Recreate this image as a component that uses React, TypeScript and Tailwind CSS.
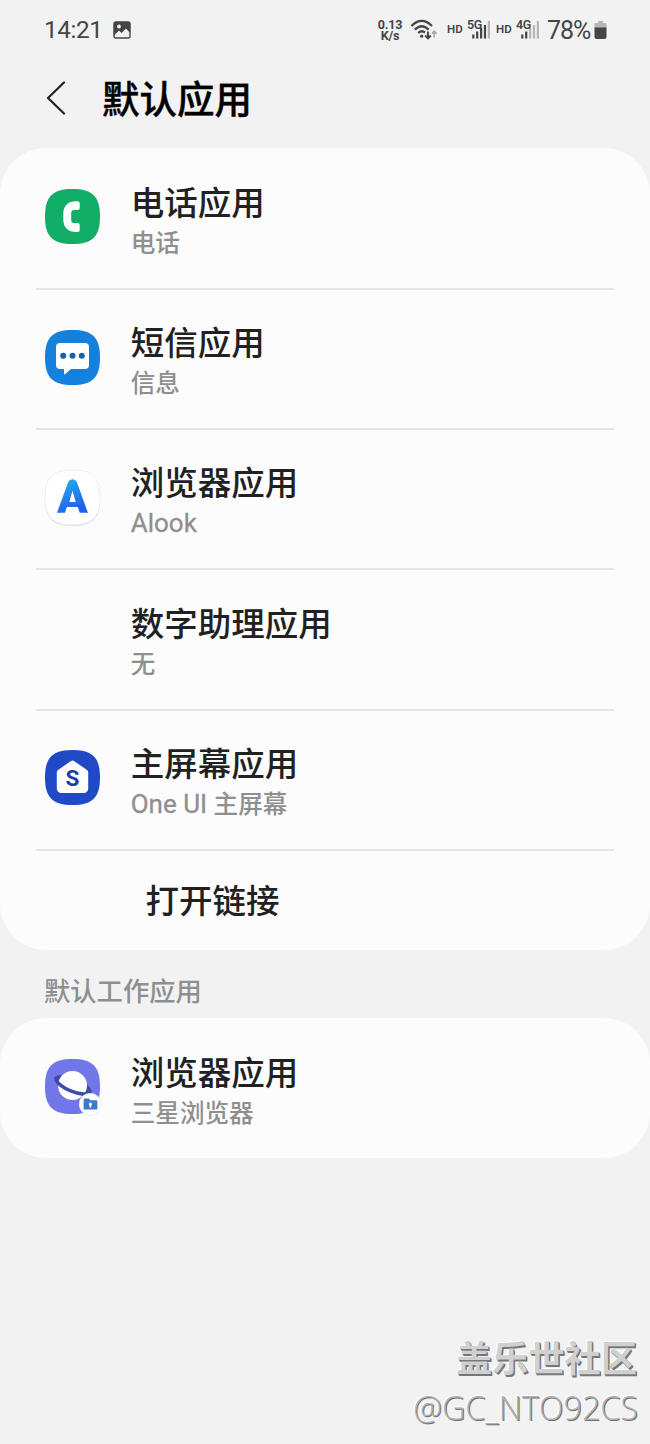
import type { ReactNode } from "react";

const SQUIRCLE = "M27.5 0C47.500 0 55 7.500 55 27.500S47.500 55 27.500 55 0 47.500 0 27.500 7.500 0 27.500 0Z";

function PhoneIcon() {
  return (
    <svg viewBox="0 0 55 55" className="size-[55px]">
      <path d={SQUIRCLE} fill="#12ae67" />
      <path
        d="M31.200 12.300h1.500a2 2 0 0 1 2 2v4.800a2 2 0 0 1-2 2h-3.200c-2.200 0-3.300 1-3.300 3.200v6.600c0 2.200 1.100 3.200 3.300 3.200h3.200a2 2 0 0 1 2 2v4.800a2 2 0 0 1-2 2h-1.500c-8 0-12.900-4.600-12.900-12.500v-5.600c0-7.900 4.900-12.500 12.900-12.500Z"
        fill="#fff"
      />
    </svg>
  );
}

function MessageIcon() {
  return (
    <svg viewBox="0 0 55 55" className="size-[55px]">
      <path d={SQUIRCLE} fill="#1482dc" />
      <path
        d="M15 13h25a4 4 0 0 1 4 4v18a4 4 0 0 1-4 4H26l-6 5.300a.6.6 0 0 1-1-.5V39h-4a4 4 0 0 1-4-4V17a4 4 0 0 1 4-4Z"
        fill="#fff"
      />
      <circle cx="18.200" cy="25.700" r="3" fill="#1560b0" />
      <circle cx="27.500" cy="25.700" r="3" fill="#1560b0" />
      <circle cx="36.800" cy="25.700" r="3" fill="#1560b0" />
    </svg>
  );
}

function AlookIcon() {
  return (
    <svg viewBox="0 0 55 55" className="size-[55px] overflow-visible">
      <defs>
        <linearGradient id="alook" x1="0" y1="0" x2="0.4" y2="1">
          <stop offset="0" stopColor="#20b4ee" />
          <stop offset="1" stopColor="#2260e8" />
        </linearGradient>
      </defs>
      <path d={SQUIRCLE} transform="translate(0 .8)" fill="#d2d2d4" />
      <path d={SQUIRCLE} fill="#fff" stroke="#ebe6ea" strokeWidth=".7" />
      <path
        d="M23.200 12Q24.500 9.300 27.500 9.300T31.800 12L42.900 42.800H34.800L32.800 37H21.800L20 42.800H12ZM27.500 20.700L24.300 32H30.700Z"
        fill="url(#alook)"
        fillRule="evenodd"
      />
    </svg>
  );
}

function HomeIcon() {
  return (
    <svg viewBox="0 0 55 55" className="size-[55px]">
      <path d={SQUIRCLE} fill="#2049c6" />
      <path
        d="M25.700 11.200a3 3 0 0 1 3.600 0L42 20q1.200.9 1.200 2.400V38.500a4.500 4.500 0 0 1-4.500 4.500H16.300a4.500 4.500 0 0 1-4.500-4.500V22.400q0-1.500 1.200-2.400Z"
        fill="#fff"
      />
      <text
        x="27.500"
        y="36.300"
        textAnchor="middle"
        fontFamily="Roboto"
        fontWeight="700"
        fontSize="22.500"
        fill="#1c3f9e"
      >
        S
      </text>
    </svg>
  );
}

function InternetIcon() {
  return (
    <svg viewBox="0 0 55 55" className="size-[55px] overflow-visible">
      <path d={SQUIRCLE} fill="#7176e8" />
      <g transform="translate(28 26.200) rotate(22)">
        <ellipse rx="19.800" ry="7.500" fill="#3f4ca6" />
      </g>
      <circle cx="27.500" cy="26.500" r="14.500" fill="#fff" />
      <path
        d="M-18.300 0C-15 8.200 15 8.200 18.300 0"
        transform="translate(28 26.200) rotate(22)"
        fill="none"
        stroke="#3f4ca6"
        strokeWidth="3.600"
        strokeLinecap="round"
      />
      <circle cx="45.200" cy="45.300" r="11" fill="#fff" stroke="#e4e4ee" strokeWidth=".6" />
      <path
        d="M39.800 39.600h4l1.600 1.600h5.800a1.200 1.200 0 0 1 1.200 1.200v7a1.200 1.200 0 0 1-1.200 1.200H39.800a1.200 1.200 0 0 1-1.200-1.200v-8.600a1.200 1.200 0 0 1 1.200-1.200Z"
        fill="#3f78cf"
      />
      <path d="M45.400 43.400a1.700 1.700 0 0 1 .8 3.100v2h-1.600v-2a1.700 1.700 0 0 1 .8-3.100Z" fill="#fff" />
    </svg>
  );
}

function Signal({ label, on }: { label: string; on: number }) {
  const heights = [4, 7, 10.500, 13.500, 17.500];
  return (
    <div className="relative h-6 w-[23px]">
      <span className="absolute top-[1px] left-0 text-[12.500px] leading-none font-semibold tracking-[-0.5px]">
        {label}
      </span>
      <svg viewBox="0 0 23 24" className="h-6 w-[23px]">
        {heights.map((h, i) => (
          <rect
            key={h}
            x={5.200 + i * 3.900}
            y={20.500 - h}
            width="2.200"
            height={h}
            fill={i < on ? "#444" : "#b4b4b4"}
          />
        ))}
      </svg>
    </div>
  );
}

function StatusBar() {
  return (
    <div className="flex h-[60px] items-center pl-[44px] text-[#454545]">
      <span className="w-[58px] pt-[1px] text-[24.300px] leading-none tracking-[-0.4px] whitespace-nowrap">14:21</span>
      <svg viewBox="0 0 18 18" className="mb-px ml-[11px] size-[18px]">
        <rect x=".9" y=".9" width="16.200" height="16.200" rx="2" fill="#454545" stroke="#454545" strokeWidth="1.200" />
        <path d="M2 13.500 6 9.500 8.500 12 13 7.500 16.300 11.200V15.500Q16.300 16.300 15.500 16.300H2.500Q1.700 16.300 1.700 15.500Z" fill="#f2f2f2" />
        <circle cx="6" cy="5.500" r="1.900" fill="#f2f2f2" />
      </svg>

      <div className="ml-[246px] flex w-[26px] flex-col items-center text-[12.500px] leading-[11.500px] font-bold tracking-[-0.2px]">
        <span>0.13</span>
        <span>K/s</span>
      </div>

      {/* wifi */}
      <svg viewBox="0 0 27 24" className="mb-[3px] ml-[7px] h-6 w-[27px] shrink-0" fill="none" strokeWidth="2.300">
        <path d="M1.400 9Q11.700-1.300 22 9M4.800 12.600Q11.700 5.800 18.600 12.600M8.200 16Q11.700 12.700 15 15.500" stroke="#454545" />
        <circle cx="11.700" cy="19.200" r="1.600" fill="#454545" />
        <path d="M18 14.500v6.500M15.200 18.500l2.800 2.900 2.800-2.900" stroke="#454545" strokeWidth="1.900" />
        <path d="M24.200 20.500v-6M21.900 16.700l2.300-2.400 2.300 2.400" stroke="#aaa" strokeWidth="1.700" />
      </svg>

      <span className="ml-[10px] w-[16px] text-[11.500px] leading-none font-semibold">HD</span>
      <div className="ml-[4px]"><Signal label="5G" on={4} /></div>
      <span className="ml-[6px] w-[16px] text-[11.500px] leading-none font-semibold">HD</span>
      <div className="ml-[4px]"><Signal label="4G" on={2} /></div>
      <span className="ml-[8px] w-[45px] text-[25px] leading-none tracking-[-1px]">78%</span>
      <svg viewBox="0 0 13 20" className="ml-[2px] h-5 w-[13px] shrink-0">
        <path d="M4 1h5v2h2.500q1 0 1 1V8H.5V4q0-1 1-1H4Z" fill="#b8b8b8" />
        <path d="M.5 7.500h12V17q0 2-2 2h-8q-2 0-2-2Z" fill="#454545" />
      </svg>
    </div>
  );
}

type RowProps = { icon?: ReactNode; title: string; latin?: string; sub?: string; last?: boolean };

function Row({ icon, title, latin, sub, last }: RowProps) {
  return (
    <div className={`mx-9 flex h-[140.200px] pl-[9px] ${last ? "" : "border-b-2 border-[#e5e5e5]"}`}>
      <div className="mt-[39.700px] w-[55px] shrink-0">{icon}</div>
      <div className="ml-[30.700px] pt-[33.200px]">
        <div className="text-[33.500px] leading-[42px] font-medium text-[#212121]">{title}</div>
        <div className="h-[38px] text-[24.600px] leading-[37px] font-medium text-[#8f8f8f]">
          {latin && <span className="text-[26px] font-normal [-webkit-text-stroke:0.3px_#8f8f8f]">{latin}</span>}
          {sub}
        </div>
      </div>
    </div>
  );
}

export default function App() {
  return (
    <div className="flex h-[1444px] w-[650px] flex-col bg-[#f2f2f2] font-[Roboto,'Noto_Sans_CJK_SC',sans-serif]">
      <StatusBar />

      <header className="flex h-[88px] items-start pt-[14px] pl-[46px]">
        <svg viewBox="0 0 20 34" className="mt-[7px] h-[34px] w-5" fill="none" stroke="#222" strokeWidth="2.200" strokeLinecap="round" strokeLinejoin="round">
          <path d="M18 1.500 2 17l16 15.500" />
        </svg>
        <h1 className="ml-[36px] pt-[1px] text-[37.500px] leading-[50px] font-medium text-black [-webkit-text-stroke:0.4px_black]">默认应用</h1>
      </header>

      <section className="h-[802px] rounded-[46px] bg-[#fcfcfc] pt-[1.800px]">
        <Row icon={<PhoneIcon />} title="电话应用" sub="电话" />
        <Row icon={<MessageIcon />} title="短信应用" sub="信息" />
        <Row icon={<AlookIcon />} title="浏览器应用" latin="Alook" />
        <Row title="数字助理应用" sub="无" />
        <Row icon={<HomeIcon />} title="主屏幕应用" latin="One UI " sub="主屏幕" />
        <div className="flex h-[102px] items-center pl-[145.500px] text-[33.500px] font-medium text-[#212121]">
          打开链接
        </div>
      </section>

      <h2 className="h-[68px] pl-[44px] text-[26.300px] leading-[84px] font-medium text-[#8f8f8f]">默认工作应用</h2>

      <section className="h-[140px] rounded-[46px] bg-[#fcfcfc] pt-[1.500px]">
        <Row icon={<InternetIcon />} title="浏览器应用" sub="三星浏览器" last />
      </section>

      {/* embossed watermark */}
      <div className="mt-auto pr-[13px] pb-[14px] text-right text-[#d0d0d0]">
        <div className="text-[36.200px] leading-[48px] font-bold [text-shadow:1px_1px_0_#777,1.500px_1.500px_0_#777,-1px_-1px_0_#fff]">盖乐世社区</div>
        <div className="-mr-px font-['Open_Sans',sans-serif] text-[32.300px] leading-[46px] font-light text-[#b0b0b0] [text-shadow:1px_1px_0_#707070,-1px_-1px_0_#fff]">@GC_NTO92CS</div>
      </div>
    </div>
  );
}
